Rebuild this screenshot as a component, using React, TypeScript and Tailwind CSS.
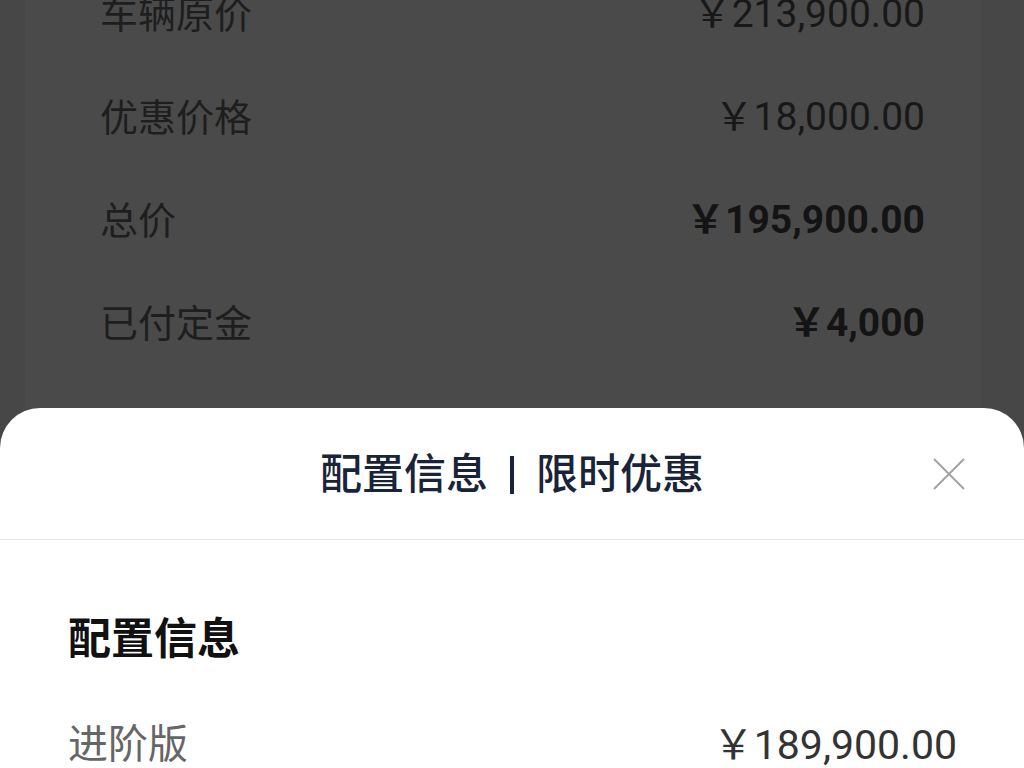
import React from "react";

const cjk = { fontFamily: 'Roboto, "Noto Sans CJK SC", sans-serif' };

const bgRows: { label: string; value: string; bold?: boolean }[] = [
  { label: "车辆原价", value: "￥213,900.00" },
  { label: "优惠价格", value: "￥18,000.00" },
  { label: "总价", value: "￥195,900.00", bold: true },
  { label: "已付定金", value: "￥4,000", bold: true },
];

export default function App() {
  return (
    <div className="w-[1024px] h-[768px] overflow-hidden bg-[#474747] flex flex-col" style={cjk}>
      <div className="h-[408px] shrink-0 overflow-hidden flex">
        <div className="ml-[25px] mr-[42px] flex-1 bg-[#4a4a4a] flex flex-col">
          <div className="-mt-[37px] pl-[75px] pr-[57px]">
            {bgRows.map((r) => (
              <div key={r.label} className="h-[103px] flex items-center justify-between">
                <span className="text-[38px] leading-none text-[#1e1e1e]">{r.label}</span>
                <span
                  className={
                    "text-[39px] leading-none " +
                    (r.bold ? "font-bold text-[#141414]" : "text-[#181818]")
                  }
                >
                  {r.value}
                </span>
              </div>
            ))}
          </div>
        </div>
      </div>
      <div className="flex-1 bg-white rounded-t-[40px] flex flex-col">
        <div className="h-[132px] relative flex items-center justify-center border-b border-[#e6e6e6]">
          <div className="text-[42px] leading-none font-medium text-[#1a2439] pt-[2px] flex items-center">
            <span>配置信息</span>
            <div className="shrink-0 w-[4px] h-[38px] bg-[#1a2439] mx-[22px]" />
            <span>限时优惠</span>
          </div>
          <svg
            className="absolute right-[59px] top-[50px]"
            width="32"
            height="32"
            viewBox="0 0 32 32"
            fill="none"
            stroke="#a3a3a3"
            strokeWidth="2"
          >
            <line x1="1" y1="1" x2="31" y2="31" />
            <line x1="31" y1="1" x2="1" y2="31" />
          </svg>
        </div>
        <div className="pl-[68px] pr-[67px] pt-[77px]">
          <div className="text-[43px] leading-[44px] font-bold text-[#111111]">配置信息</div>
          <div className="mt-[64px] flex items-center justify-between h-[40px]">
            <span className="text-[40px] leading-none text-[#666666]">进阶版</span>
            <span className="text-[41px] leading-none text-[#333333]">￥189,900.00</span>
          </div>
        </div>
      </div>
    </div>
  );
}
